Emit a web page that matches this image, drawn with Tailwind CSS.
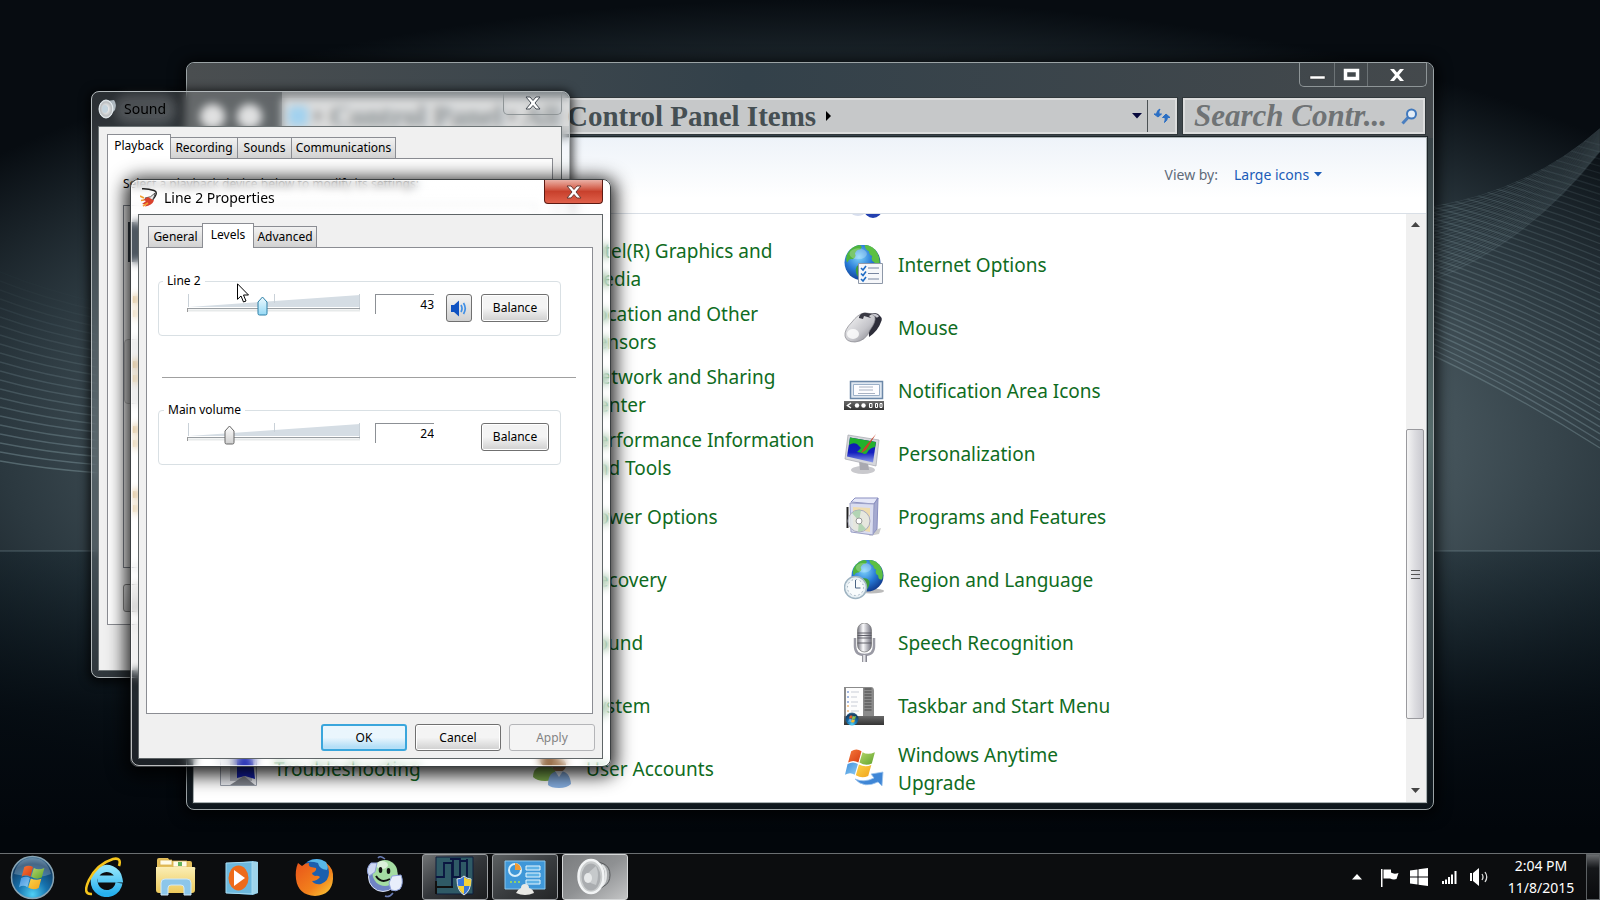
<!DOCTYPE html>
<html lang="en">
    <head>
        <meta charset="UTF-8" />
        <meta name="viewport" content="width=device-width, initial-scale=1.0" />
        <title>Desktop</title>
        <script src="https://cdn.jsdelivr.net/npm/@tailwindcss/browser@4"></script>
        <style>
            .slider {
                appearance: none;
                background: transparent;
            }
            .slider::-webkit-slider-thumb {
                appearance: none;
                width: 11px;
                height: 20px;
                background: url("data:image/svg+xml,<svg xmlns='http://www.w3.org/2000/svg' width='11' height='20'><defs><linearGradient id='a' x2='0' y2='1'><stop stop-color='white'/><stop offset='1' stop-color='%23cfcfcf'/></linearGradient></defs><path d='M5.5 1L10 6v11.500q0 1.500-1.500 1.500h-6Q1 19 1 17.500V6z' fill='url(%23a)' stroke='%23666'/></svg>");
            }
            .slider-hot::-webkit-slider-thumb {
                background: url("data:image/svg+xml,<svg xmlns='http://www.w3.org/2000/svg' width='11' height='20'><defs><linearGradient id='a' x2='0' y2='1'><stop stop-color='%23eefaff'/><stop offset='1' stop-color='%2396d9f5'/></linearGradient></defs><path d='M5.5 1L10 6v11.500q0 1.500-1.500 1.500h-6Q1 19 1 17.500V6z' fill='url(%23a)' stroke='%232c7fa6'/></svg>");
            }
        </style>
    </head>
    <body
        class="relative h-screen overflow-hidden bg-black font-['Noto_Sans','Open_Sans',sans-serif] text-[12px] leading-[18px] text-black"
    >
        <!-- wallpaper -->
        <svg
            class="absolute inset-0 h-full w-full"
            viewBox="0 0 1600 900"
            preserveAspectRatio="none"
            aria-hidden="true"
        >
            <defs>
                <radialGradient id="glow" gradientUnits="userSpaceOnUse" cx="0" cy="0" r="1" gradientTransform="translate(820 440) scale(1080 440)">
                    <stop offset="0" stop-color="#6a7c82" />
                    <stop offset=".5" stop-color="#506067" />
                    <stop offset=".76" stop-color="#2b383f" />
                    <stop offset="1" stop-color="#070c11" />
                </radialGradient>
                <linearGradient id="floor" x2="0" y2="1">
                    <stop offset="0" stop-color="#0b1a22" stop-opacity=".35" />
                    <stop offset=".45" stop-color="#050c12" stop-opacity=".85" />
                    <stop offset=".8" stop-color="#02060b" />
                </linearGradient>
                <clipPath id="veil">
                    <path d="M1434 206Q1530 190 1600 128V470H1434z" />
                </clipPath>

                <radialGradient id="sea" cx=".4" cy=".35" r=".75">
                    <stop offset="0" stop-color="#7fd4fb" />
                    <stop offset=".5" stop-color="#2779d6" />
                    <stop offset="1" stop-color="#0b2c7c" />
                </radialGradient>
                <linearGradient id="metal" x2="1" y2="1">
                    <stop offset="0" stop-color="#fdfdfd" />
                    <stop offset=".6" stop-color="#c4c4c9" />
                    <stop offset="1" stop-color="#77777f" />
                </linearGradient>
                <linearGradient id="metalH" x2="1" y2="0">
                    <stop offset="0" stop-color="#75757f" />
                    <stop offset=".4" stop-color="#fbfbfd" />
                    <stop offset="1" stop-color="#70707c" />
                </linearGradient>
                <linearGradient id="screen" x2="0" y2="1">
                    <stop offset="0" stop-color="#0a17a8" />
                    <stop offset=".6" stop-color="#1420c0" />
                    <stop offset="1" stop-color="#8c9be8" />
                </linearGradient>
                <linearGradient id="bar" x2="0" y2="1">
                    <stop offset="0" stop-color="#6a6a6a" />
                    <stop offset="1" stop-color="#333" />
                </linearGradient>
                <linearGradient id="fr" x2="1" y2="1"><stop offset="0" stop-color="#f6793a" /><stop offset="1" stop-color="#d63c12" /></linearGradient>
                <linearGradient id="fg" x2="1" y2="1"><stop offset="0" stop-color="#b6d66a" /><stop offset="1" stop-color="#5ea32c" /></linearGradient>
                <linearGradient id="fb" x2="1" y2="1"><stop offset="0" stop-color="#3f8fdc" /><stop offset="1" stop-color="#8ccbf3" /></linearGradient>
                <linearGradient id="fy" x2="1" y2="1"><stop offset="0" stop-color="#fbd44a" /><stop offset="1" stop-color="#f2a31b" /></linearGradient>
                <radialGradient id="orb" cx=".5" cy=".9" r=".9">
                    <stop offset="0" stop-color="#4fd0f5" />
                    <stop offset=".4" stop-color="#1672ae" />
                    <stop offset=".8" stop-color="#123c63" />
                    <stop offset="1" stop-color="#47779a" />
                </radialGradient>
                <linearGradient id="ie" x2="0" y2="1"><stop offset="0" stop-color="#8fe4fc" /><stop offset="1" stop-color="#27b0ee" /></linearGradient>
                <linearGradient id="folder" x2="0" y2="1"><stop offset="0" stop-color="#fbeeb4" /><stop offset="1" stop-color="#ecc95c" /></linearGradient>
                <linearGradient id="fox" x2="1" y2="1"><stop offset="0" stop-color="#e8541a" /><stop offset=".6" stop-color="#f2811c" /><stop offset="1" stop-color="#fbd03a" /></linearGradient>
                <radialGradient id="cone"><stop offset="0" stop-color="#777" /><stop offset=".35" stop-color="#e8e8e8" /><stop offset=".8" stop-color="#b9bdc0" /><stop offset="1" stop-color="#eceff1" /></radialGradient>

                <symbol id="globe" viewBox="0 0 34 34">
                    <circle cx="17" cy="17" r="16.500" fill="url(#sea)" />
                    <path d="M3 9Q7 2 14 1q4 1 1 4-4 0-5 4 2 3-2 5-3-1-5 3-2-3 0-8z" fill="#4fb53c" />
                    <path d="M19 1q8 0 12 8 3 6 1 12-4 1-4-4-4-2-2-6-3-1-3-4-4-2-4-6z" fill="#5cc043" />
                    <path d="M12 20q5-1 7 3 1 4-3 9-4-1-5-6-1-3 1-6z" fill="#3f9e3a" />
                    <ellipse cx="13" cy="9" rx="8" ry="5" fill="#fff" opacity=".25" />
                </symbol>
                <symbol id="flag" viewBox="0 0 32 30">
                    <path d="M6 3Q11 0 16 3l-3 11Q8 11 3 14z" fill="url(#fr)" />
                    <path d="M17 4q5 3 12 0l-3 11q-6 3-12-1z" fill="url(#fg)" />
                    <path d="M2.500 15.500Q8 12.500 12.500 15.500L9.500 26Q5 23 0 26z" fill="url(#fb)" />
                    <path d="M13.500 16q6 3 12 .5L22.500 27q-6 3-12-.5z" fill="url(#fy)" />
                </symbol>
            </defs>
            <rect width="1600" height="900" fill="url(#glow)" />
            <g id="waves" fill="none" stroke-width="1.400"></g>
            <g id="veil-waves" fill="none" stroke-width="1.400" clip-path="url(#veil)"></g>
            <rect y="551" width="1600" height="349" fill="url(#floor)" />
            <path d="M0 551h1600" stroke="#7d969c" stroke-opacity=".5" />
        </svg>

        <!-- Control Panel -->
        <section
            class="absolute top-[62px] left-[186px] flex h-[748px] w-[1248px] flex-col rounded-lg border border-[#9ba3a5] bg-linear-to-b from-[#313a3f] via-[#566b6b] to-[#0d151b] px-[6px] pb-[6px] shadow-[0_2px_14px_4px_rgba(0,0,0,0.75)]"
        >
            <div class="absolute inset-x-0 top-0 h-[75px] rounded-t-lg bg-linear-to-r from-[#4a4e50] via-[#33414a] via-45% to-[#44494c]"></div>
            <div class="relative flex h-[35px] justify-end">
                <div class="flex h-[24px] rounded-b-[5px] border border-t-0 border-[#8e9597] text-white">
                    <button class="flex w-[35px] items-end justify-center border-r border-[#6c7376] pb-[6px]" aria-label="Minimize">
                        <svg width="17" height="5"><path d="M1 1h15v3H1z" fill="#fff" stroke="#333" stroke-width=".5" /></svg>
                    </button>
                    <button class="flex w-[33px] items-center justify-center border-r border-[#6c7376]" aria-label="Maximize">
                        <svg width="17" height="13"><path d="M2.500 2.500h12v8h-12z" fill="none" stroke="#fff" stroke-width="3.500" /></svg>
                    </button>
                    <button class="flex w-[58px] items-center justify-center" aria-label="Close">
                        <svg width="14" height="12"><path d="M0 0h4l3 3.500L10 0h4L9 6l5 6h-4L7 8.500 4 12H0l5-6z" fill="#fff" /></svg>
                    </button>
                </div>
            </div>
            <div class="relative flex h-[36px] shrink-0 items-stretch pr-[2px]">
                <div class="flex w-[89px] items-center gap-3 pl-[7px]">
                    <button class="size-[25px] rounded-full border border-white bg-white/80" aria-label="Back"></button>
                    <button class="size-[25px] rounded-full border border-white bg-white/80" aria-label="Forward"></button>
                </div>
                <nav
                    class="flex min-w-0 flex-1 items-center border-2 border-[#dcdddd] bg-[#c6c8c9] pl-[4px] font-['Liberation_Serif',serif] text-[29px] leading-[30px] font-bold text-[#454f53] outline outline-[#31383b]"
                    aria-label="Address"
                >
                    <span class="size-[20px] rounded bg-[#6db8e6]"></span>
                    <svg class="mx-[8px] shrink-0" width="6" height="10"><path d="M0 0l5 5-5 5z" /></svg>
                    <a href="#" class="shrink-0">Control Panel</a>
                    <svg class="mx-[7px] shrink-0" width="6" height="10"><path d="M0 0l5 5-5 5z" /></svg>
                    <a href="#" class="shrink-0">All Control Panel Items</a>
                    <svg class="mx-[10px] shrink-0" width="6" height="10"><path d="M0 0l5 5-5 5z" fill="#000" /></svg>
                    <svg class="mr-[5px] ml-auto" width="10" height="6"><path d="M0 0h10L5 5.500z" fill="#06083c" /></svg>
                    <button class="flex h-full w-[28px] items-center justify-center border-l border-[#4b5154]" aria-label="Refresh">
                        <svg width="18" height="16" viewBox="0 0 18 16">
                            <path d="M5 9l-4-3h2.500Q4 2 7 1 5.500 3 6 6h2.500z" fill="#2b6fc4" stroke="#2b6fc4" />
                            <path d="M13 6l4 3.500h-2.500q0 3-3 5Q12.500 12 12 9.500H9.500z" fill="#2b6fc4" stroke="#2b6fc4" />
                        </svg>
                    </button>
                </nav>
                <label class="ml-[6px] flex w-[242px] items-center border-2 border-[#dcdddd] bg-[#c6c8c9] pr-[5px] pl-[9px] outline outline-[#31383b]">
                    <input
                        type="text"
                        aria-label="Search Control Panel"
                        placeholder="Search Contr..."
                        class="w-[204px] min-w-0 flex-1 font-['Liberation_Serif',serif] text-[31px] leading-[30px] font-bold italic outline-none placeholder:text-[#6f7375]"
                    />
                    <svg class="shrink-0" width="17" height="17" viewBox="0 0 17 17" fill="none">
                        <path d="M1.500 15.500L7 9.500" stroke="#4a7fc0" stroke-width="3" />
                        <circle cx="10.500" cy="6" r="4.500" fill="#e3edf7" stroke="#3f78bd" stroke-width="2" />
                    </svg>
                </label>
            </div>
            <main class="relative mt-[3px] flex min-h-0 flex-1 flex-col border border-[#a9b1b3] bg-white outline outline-[#1c2428]">
                <div class="flex h-[76px] shrink-0 items-center justify-end gap-[16px] border-b border-[#d9dfe6] bg-linear-to-b from-[#eef3f9] to-white to-80% pr-[104px] pb-[2px] text-[14px] leading-[20px]">
                    <label for="view" class="text-[#5f6b7a]">View by:</label>
                    <span class="relative flex items-center">
                        <select id="view" class="w-[88px] appearance-none text-[#1c5cb8]">
                            <option>Large icons</option>
                        </select>
                        <svg class="pointer-events-none absolute right-0" width="8" height="5"><path d="M0 0h8L4 4.500z" fill="#1c5cb8" /></svg>
                    </span>
                </div>
                <div class="flex min-h-0 flex-1">
                    <div class="flex min-w-0 flex-1 items-end overflow-hidden pb-[2px] pl-[26px] text-[19px] leading-[28px] text-[#0f6c22]">
                        <ul class="w-[312px]">
                            <li class="flex h-[63px] items-center gap-[14px]">
                                <svg class="shrink-0" width="40" height="40" viewBox="0 0 40 40">
                                    <path d="M.500 3.500h36v33h-36z" fill="#eef0f5" stroke="#9aa0ac" />
                                    <path d="M10 6h22v26H10z" fill="#b9bcc6" />
                                    <path d="M17 4l15-1 3 27-10-3-8 2z" fill="#1420b0" />
                                    <path d="M10 36l14-9 11 9z" fill="#82868f" />
                                </svg>
                                <a href="#" class="w-[232px]">Troubleshooting</a>
                            </li>
                        </ul>
                        <ul class="w-[312px]">
                            <li class="flex h-[63px] items-center pl-[54px]"><a href="#" class="w-[232px]">Intel(R) Graphics and Media</a></li>
                            <li class="flex h-[63px] items-center pl-[54px]"><a href="#" class="w-[232px]">Location and Other Sensors</a></li>
                            <li class="flex h-[63px] items-center pl-[54px]"><a href="#" class="w-[232px]">Network and Sharing Center</a></li>
                            <li class="flex h-[63px] items-center pl-[54px]"><a href="#" class="w-[232px]">Performance Information and Tools</a></li>
                            <li class="flex h-[63px] items-center pl-[54px]"><a href="#" class="w-[232px]">Power Options</a></li>
                            <li class="flex h-[63px] items-center pl-[54px]"><a href="#" class="w-[232px]">Recovery</a></li>
                            <li class="flex h-[63px] items-center pl-[54px]"><a href="#" class="w-[232px]">Sound</a></li>
                            <li class="flex h-[63px] items-center pl-[54px]"><a href="#" class="w-[232px]">System</a></li>
                            <li class="flex h-[63px] items-center gap-[14px]">
                                <svg class="shrink-0" width="40" height="40" viewBox="0 0 40 40">
                                    <circle cx="17" cy="10" r="9" fill="#8a5a34" />
                                    <path d="M1 28Q1 17 13 17t12 12q-4 3-12 3T1 28z" fill="#7fae4e" />
                                    <circle cx="27" cy="16" r="7" fill="#a47a54" />
                                    <path d="M16 36q0-14 11-14t12 13q-4 4-12 4t-11-3z" fill="#86aee0" />
                                    <path d="M23 22l4 6 4-6z" fill="#e8f0fa" />
                                </svg>
                                <a href="#" class="w-[232px]">User Accounts</a>
                            </li>
                        </ul>
                        <ul class="w-[312px]">
                            <li class="flex h-[63px] items-center gap-[14px]">
                                <!-- only the foot of this icon shows under the header -->
                                <svg class="shrink-0" width="40" height="40" viewBox="0 0 40 40">
                                    <ellipse cx="14" cy="28" rx="8" ry="6" fill="#d7deee" />
                                    <circle cx="29" cy="27" r="9" fill="#2340b0" />
                                </svg>
                            </li>
                            <li class="flex h-[63px] items-center gap-[14px]">
                                <svg class="shrink-0" width="40" height="40" viewBox="0 0 40 40">
                                    <use href="#globe" x="0" y="-1" width="37" height="37" />
                                    <path d="M14.500 18.500h24v20h-24z" fill="#f6f7fa" stroke="#8e98a8" />
                                    <path d="M24 23h11M24 28.500h11M24 34h11" stroke="#7785a0" stroke-width="1.200" />
                                    <path d="M17 23l2 2 3-4M17 28.500l2 2 3-4M17 34l2 2 3-4" fill="none" stroke="#1f6cc4" stroke-width="1.600" />
                                </svg>
                                <a href="#" class="w-[232px]">Internet Options</a>
                            </li>
                            <li class="flex h-[63px] items-center gap-[14px]">
                                <svg class="shrink-0" width="40" height="40" viewBox="0 0 40 40">
                                    <path d="M24 6q9-3 12 2 3 2 1 6-3 9-12 15z" fill="#2e2e3a" />
                                    <path d="M26 7q6-1 8 2" fill="none" stroke="#c9c9d0" stroke-width="2.500" />
                                    <path d="M1 28Q0 22 8 14 14 6 20 5q9 0 11 4 1 5-5 13-4 11-15 12-9 0-10-6z" fill="url(#metal)" stroke="#85858d" stroke-width=".7" />
                                    <path d="M15 9q2-5 8-4l5 1-3 2 2 2-7-2-1 3-4-1z" fill="#3a3a44" />
                                    <ellipse cx="9" cy="26" rx="6" ry="5" fill="#fff" opacity=".8" />
                                </svg>
                                <a href="#" class="w-[232px]">Mouse</a>
                            </li>
                            <li class="flex h-[63px] items-center gap-[14px]">
                                <svg class="shrink-0" width="40" height="40" viewBox="0 0 40 40">
                                    <path d="M6.500 10.500h32v17h-32z" fill="#dfe7f0" stroke="#6c88a8" stroke-width="1.500" />
                                    <path d="M9.500 13.500h26v11h-26z" fill="#fdfdff" stroke="#9bb0c8" />
                                    <path d="M15 16h14M15 19h14M14 22.500h17" stroke="#a8b2c2" />
                                    <path d="M0 30h40v9H0z" fill="url(#bar)" />
                                    <path d="M7 32l-3.500 2.500L7 37" fill="none" stroke="#fff" stroke-width="1.500" />
                                    <circle cx="13" cy="34.500" r="2.200" fill="#fff" /><circle cx="19.500" cy="34.500" r="2.200" fill="#fff" />
                                    <path d="M25.500 32.500h2.500v4h-2.500zM31.500 32.500h2v4h-2zM36 32.500h2v4h-2z" fill="none" stroke="#fff" />
                                </svg>
                                <a href="#" class="w-[232px]">Notification Area Icons</a>
                            </li>
                            <li class="flex h-[63px] items-center gap-[14px]">
                                <svg class="shrink-0" width="40" height="40" viewBox="0 0 40 40">
                                    <ellipse cx="19" cy="36" rx="12" ry="4" fill="#c9c9cd" />
                                    <path d="M15 27l9 2 1 7h-9z" fill="#a9a9b0" />
                                    <path d="M4 1l31 5-3 26L1 25z" fill="#d6d7dc" stroke="#a5a6ad" stroke-width=".7" />
                                    <path d="M6 3.500l26 4.500-3 20.500L3 22.500z" fill="url(#screen)" />
                                    <path d="M6 3.500l26 4.500-1 5q-6 1-8 6-2 2-5 0l-5-1 4-4-4-4q-4-2-8 1z" fill="#23b02c" />
                                    <path d="M32 0L20 14l-3 5 5-3z" fill="#c6432a" />
                                </svg>
                                <a href="#" class="w-[232px]">Personalization</a>
                            </li>
                            <li class="flex h-[63px] items-center gap-[14px]">
                                <svg class="shrink-0" width="40" height="40" viewBox="0 0 40 40">
                                    <path d="M28 34l9-3-2 6-10 2z" fill="#ccc" />
                                    <path d="M7 5l4-4h23l-4 6z" fill="#e6e8f8" stroke="#8a8fc0" />
                                    <path d="M30 7l4-6-1 31-5 6z" fill="#a5aad0" stroke="#8a8fc0" />
                                    <path d="M6 6l24 1-1 31-22-3z" fill="#d9dcef" stroke="#9a9fc6" />
                                    <path d="M9 10l17 1v24l-17-3z" fill="#efdcae" />
                                    <path d="M2.500 10h2v21h-2z" fill="#222" />
                                    <circle cx="15" cy="24" r="11" fill="#e4e9e6" fill-opacity=".85" stroke="#aab" />
                                    <path d="M15 24L8 16q5-4 9-3zM15 24l7 8q-4 3-8 3z" fill="#a5cfa9" opacity=".8" />
                                    <circle cx="15" cy="24" r="3" fill="#fff" stroke="#999" />
                                </svg>
                                <a href="#" class="w-[232px]">Programs and Features</a>
                            </li>
                            <li class="flex h-[63px] items-center gap-[14px]">
                                <svg class="shrink-0" width="40" height="40" viewBox="0 0 40 40">
                                    <ellipse cx="27" cy="31" rx="13" ry="2.500" fill="#bbb" />
                                    <use href="#globe" x="7" y="-1" width="33" height="33" />
                                    <circle cx="11.500" cy="27.500" r="11" fill="#e8f0f4" stroke="#9fb4c2" stroke-width="1.500" />
                                    <circle cx="11.500" cy="27.500" r="8" fill="#f8fbfc" stroke="#7a90a4" stroke-dasharray="1 3.200" />
                                    <path d="M11.500 20v8h5" fill="none" stroke="#4a6484" />
                                </svg>
                                <a href="#" class="w-[232px]">Region and Language</a>
                            </li>
                            <li class="flex h-[63px] items-center gap-[14px]">
                                <svg class="shrink-0" width="40" height="40" viewBox="0 0 40 40">
                                    <path d="M11 15v8q0 9 9.500 9t9.500-9v-8" fill="none" stroke="#9a9aa4" stroke-width="2.500" />
                                    <path d="M18 32h5v7h-5z" fill="url(#metalH)" />
                                    <rect x="13.500" y="0" width="14" height="29" rx="7" fill="url(#metalH)" stroke="#777" stroke-width=".7" />
                                    <path d="M13.500 10h14M13.500 12.500h14M13.500 15h14M13.500 20h14" stroke="#55555f" stroke-width=".9" />
                                </svg>
                                <a href="#" class="w-[232px]">Speech Recognition</a>
                            </li>
                            <li class="flex h-[63px] items-center gap-[14px]">
                                <svg class="shrink-0" width="40" height="40" viewBox="0 0 40 40">
                                    <path d="M0 1h27q3 0 3 4v26H0z" fill="#8b8b8b" />
                                    <path d="M2 2h17v28H2z" fill="#fdfdfd" />
                                    <path d="M3 6h2M3 11h2M3 16h2" stroke="#4a74c4" /><path d="M3 20h2M3 25h2" stroke="#e8963a" />
                                    <path d="M7 6h8M7 11h6M7 16h7M7 20h6M7 25h8" stroke="#c9cdd6" />
                                    <path d="M20.500 3h7M20.500 6h7M20.500 9h7M20.500 12h7M20.500 15h7M20.500 18h7M20.500 21h7M20.500 24h7" stroke="#5f5f5f" stroke-width="1.500" />
                                    <path d="M0 30h40v9H0z" fill="url(#bar)" />
                                    <circle cx="8" cy="33" r="6.500" fill="url(#orb)" />
                                    <use href="#flag" x="4" y="29" width="9" height="8" />
                                </svg>
                                <a href="#" class="w-[232px]">Taskbar and Start Menu</a>
                            </li>
                            <li class="flex h-[63px] items-center gap-[14px]">
                                <svg class="shrink-0" width="40" height="40" viewBox="0 0 40 40">
                                    <use href="#flag" x="1" y="-1" width="33" height="31" />
                                    <path d="M11 30q9 4 19-1l-3-4 12-2-1 14-4-4q-14 7-23-3z" fill="#3f86d6" stroke="#9cc4ee" stroke-width=".8" />
                                </svg>
                                <a href="#" class="w-[232px]">Windows Anytime Upgrade</a>
                            </li>
                        </ul>
                    </div>
                    <div class="flex w-[20px] shrink-0 flex-col items-center bg-[#f0f0f0] pt-[8px] pr-[2px] pb-[9px]">
                        <svg width="9" height="5"><path d="M4.500 0L9 5H0z" fill="#444" /></svg>
                        <div class="mt-[202px] flex h-[290px] w-[18px] flex-col items-center justify-center gap-[3px] rounded-[2px] border border-[#9a9a9e] bg-linear-to-r from-[#f4f4f4] via-[#dcdce0] to-[#c9c9cf]">
                            <span class="h-px w-[9px] bg-[#555]"></span>
                            <span class="h-px w-[9px] bg-[#555]"></span>
                            <span class="h-px w-[9px] bg-[#555]"></span>
                        </div>
                        <svg class="mt-auto" width="9" height="5"><path d="M0 0h9L4.500 5z" fill="#444" /></svg>
                    </div>
                </div>
            </main>
        </section>

        <!-- Sound -->
        <section
            class="absolute top-[91px] left-[91px] flex h-[587px] w-[479px] flex-col rounded-lg border border-[#b4babc] bg-white/15 pr-[7px] pb-[6px] pl-[6px] shadow-[0_2px_10px_3px_rgba(0,0,0,0.7)] backdrop-blur-[4px]"
        >
            <div class="absolute inset-y-0 top-0 right-0 left-[190px] h-[34px] rounded-tr-lg bg-white/25"></div>
            <header class="relative flex h-[34px] shrink-0 items-start">
                <div class="flex h-full items-center gap-[3px]">
                    <svg width="19" height="20" viewBox="0 0 19 20">
                        <path d="M9 2l7-1q3 4 1 10l-6 6z" fill="#aab4bc" />
                        <ellipse cx="8" cy="10" rx="7" ry="9" fill="url(#cone)" stroke="#e6eef2" />
                        <ellipse cx="7" cy="10" rx="3" ry="4" fill="#c4d4de" />
                    </svg>
                    <h2 class="rounded-xl bg-white/15 px-1 text-[14px] shadow-[0_0_8px_6px_rgba(255,255,255,0.15)]">Sound</h2>
                </div>
                <button class="ml-auto flex h-[23px] w-[59px] items-center justify-center rounded-b-[5px] border border-t-0 border-[#8e9496]" aria-label="Close">
                    <svg width="16" height="14" viewBox="-1 -1 16 14"><path d="M0 0h4l3 3.500L10 0h4L9 6l5 6h-4L7 8.500 4 12H0l5-6z" fill="#fff" stroke="#444b52" /></svg>
                </button>
            </header>
            <div class="relative flex min-h-0 flex-1 flex-col border border-[#6d7476] bg-[#f0f0f0] px-[8px] pt-[7px] pb-[45px]">
                <div class="flex items-end" role="tablist">
                    <button role="tab" class="relative z-10 -mb-px h-[25px] w-[64px] border border-b-0 border-[#8b8d93] bg-white pb-[3px]">Playback</button>
                    <button role="tab" class="h-[21px] w-[67px] border border-b-0 border-l-0 border-[#8b8d93] bg-linear-to-b from-[#f2f2f2] to-[#d2d2d2]">Recording</button>
                    <button role="tab" class="h-[21px] w-[54px] border border-b-0 border-l-0 border-[#8b8d93] bg-linear-to-b from-[#f2f2f2] to-[#d2d2d2]">Sounds</button>
                    <button role="tab" class="h-[21px] w-[104px] border border-b-0 border-l-0 border-[#8b8d93] bg-linear-to-b from-[#f2f2f2] to-[#d2d2d2]">Communications</button>
                </div>
                <div class="flex flex-1 flex-col border border-[#8b8d93] bg-white px-[15px] pt-[16px] pb-[12px]">
                    <p>Select a playback device below to modify its settings:</p>
                    <ul class="mt-[12px] flex-1 border border-[#828790] bg-white pt-[3px]">
                        <li class="flex h-[65px] items-center pl-[4px]"><span class="h-[40px] w-[40px] bg-[#3a444f]"></span></li>
                        <li class="flex h-[65px] flex-col justify-center gap-[7px] pl-[9px]">
                            <span class="size-[7px] bg-[#c89a50]"></span><span class="size-[7px] bg-[#e2c694]"></span>
                        </li>
                        <li class="flex h-[65px] flex-col justify-center gap-[7px] rounded border border-[#c4c4c4] bg-[#ececec] pl-[8px]">
                            <span class="size-[7px] bg-[#c89a50]"></span><span class="size-[7px] bg-[#d9b67a]"></span>
                        </li>
                        <li class="flex h-[65px] flex-col justify-center gap-[7px] pl-[9px]">
                            <span class="size-[7px] bg-[#c89a50]"></span><span class="size-[7px] bg-[#d9b67a]"></span>
                        </li>
                        <li class="flex h-[65px] flex-col justify-center gap-[7px] pl-[9px]">
                            <span class="size-[7px] bg-[#c89a50]"></span><span class="size-[7px] bg-[#d9b67a]"></span>
                        </li>
                    </ul>
                    <button class="mt-[16px] h-[28px] w-[86px] rounded-[3px] border border-[#888] bg-linear-to-b from-[#f2f2f2] to-[#cfcfcf]" aria-label="Configure"></button>
                </div>
            </div>
        </section>

        <!-- Line 2 Properties -->
        <section
            class="absolute top-[179px] left-[130px] flex h-[588px] w-[481px] flex-col rounded-lg border border-[#3c4042] bg-white/10 px-[7px] pb-[7px] shadow-[0_4px_18px_5px_rgba(0,0,0,0.85)] backdrop-blur-[4px]"
        >
            <div class="pointer-events-none absolute inset-0 rounded-lg border border-white/70"></div>
            <div class="absolute inset-x-0 top-0 h-[34px] rounded-t-lg bg-linear-to-b from-white/30 to-white/80"></div>
            <header class="relative flex h-[34px] shrink-0 items-start">
                <div class="flex h-full items-center gap-[6px] pt-px pl-[2px]">
                    <svg width="18" height="19" viewBox="0 0 18 19" fill="none">
                        <path d="M2 .8q6-.3 12 1.700 3 1 2 4-2 5-7 8" stroke="#222" stroke-width="1.400" />
                        <path d="M15 5q-4 5-10 5l3 5q6-2 7-10z" fill="#e9e9e9" stroke="#333" stroke-width=".8" />
                        <path d="M8 9l-5 3 3 1-4 3 4 .5-1 2q7-1 9-6z" fill="#d8402c" />
                        <path d="M0 8l4 2M1 12.500l3-.5M3 18l5-3" stroke="#f2a033" stroke-width="1.700" />
                    </svg>
                    <h2 class="text-[14px]">Line 2 Properties</h2>
                </div>
                <button
                    class="ml-auto flex h-[24px] w-[59px] items-center justify-center rounded-b-[4px] border border-t-0 border-[#5c1a12] bg-linear-to-b from-[#eab0a6] via-[#c8402c] via-50% to-[#e0604a]"
                    aria-label="Close"
                >
                    <svg width="16" height="14" viewBox="-1 -1 16 14"><path d="M0 0h4l3 3.500L10 0h4L9 6l5 6h-4L7 8.500 4 12H0l5-6z" fill="#fff" stroke="#6a3a34" /></svg>
                </button>
            </header>
            <div class="relative flex min-h-0 flex-1 flex-col border border-[#5f6567] bg-[#f0f0f0] pt-[8px] pr-[7px] pb-[7px] pl-[7px]">
                <div class="flex items-end pl-[2px]" role="tablist">
                    <button role="tab" class="h-[21px] w-[54px] border border-r-0 border-b-0 border-[#8b8d93] bg-linear-to-b from-[#f2f2f2] to-[#d2d2d2]">General</button>
                    <button role="tab" class="relative z-10 -mb-px h-[25px] w-[52px] border border-b-0 border-[#8b8d93] bg-white pb-[3px]">Levels</button>
                    <button role="tab" class="h-[21px] w-[63px] border border-b-0 border-l-0 border-[#8b8d93] bg-linear-to-b from-[#f2f2f2] to-[#d2d2d2]">Advanced</button>
                </div>
                <div class="mr-[2px] flex-1 border border-[#8b8d93] bg-white pt-[24px] pl-[11px]">
                    <fieldset class="h-[64px] w-[403px] rounded-[4px] border border-[#d9e0e4]">
                        <legend class="ml-[4px] px-[4px]">Line 2</legend>
                        <div class="flex pt-[4px] pl-[28px]">
                            <div class="relative h-[28px] w-[173px]">
                                <svg width="173" height="28">
                                    <path d="M2 13L173 1v12H2z" fill="#d5dde4" />
                                    <path d="M1.500 0v13M87.500 0v9M172.500 0v17" stroke="#c9d1d8" />
                                    <path d="M0 14.500h173" stroke="#9a9fa3" /><path d="M0 15.500h173v2H0z" fill="#e7eaea" />
                                    <path d="M.500 14v4" stroke="#999" />
                                </svg>
                                <input type="range" min="0" max="100" value="43" aria-label="Line 2 level" class="slider slider-hot absolute inset-x-0 top-[2px] h-[20px] w-full" />
                            </div>
                            <input type="text" value="43" aria-label="Line 2 level value" class="ml-[15px] h-[20px] w-[59px] border-t border-l border-[#8c9095] text-right" />
                            <button class="ml-[12px] flex h-[28px] w-[26px] items-center justify-center rounded-[3px] border border-[#707070] bg-linear-to-b from-[#f4f4f4] to-[#d0d0d0]" aria-label="Mute">
                                <svg width="18" height="17" viewBox="0 0 18 17" fill="none">
                                    <path d="M1 5h3l5-4.500v16L4 12H1z" fill="#0f52c2" />
                                    <path d="M11 5q2 3.500 0 7M13.500 3q3.500 5.500 0 11" stroke="#3f8fe6" stroke-width="1.700" />
                                </svg>
                            </button>
                            <button class="ml-[9px] h-[28px] w-[68px] rounded-[3px] border border-[#707070] bg-linear-to-b from-[#f4f4f4] from-50% to-[#cfcfcf] shadow-[inset_0_0_0_1px_#fff]">Balance</button>
                        </div>
                    </fieldset>
                    <hr class="mt-[41px] ml-[4px] w-[414px] border-[#a0a0a0]" />
                    <fieldset class="mt-[23px] h-[64px] w-[403px] rounded-[4px] border border-[#d9e0e4]">
                        <legend class="ml-[5px] px-[4px]">Main volume</legend>
                        <div class="flex pt-[4px] pl-[28px]">
                            <div class="relative h-[28px] w-[173px]">
                                <svg width="173" height="28">
                                    <path d="M2 13L173 1v12H2z" fill="#d5dde4" />
                                    <path d="M1.500 0v13M87.500 0v9M172.500 0v17" stroke="#c9d1d8" />
                                    <path d="M0 14.500h173" stroke="#9a9fa3" /><path d="M0 15.500h173v2H0z" fill="#e7eaea" />
                                    <path d="M.500 14v4" stroke="#999" />
                                </svg>
                                <input type="range" min="0" max="100" value="23" aria-label="Main volume level" class="slider absolute inset-x-0 top-[2px] h-[20px] w-full" />
                            </div>
                            <input type="text" value="24" aria-label="Main volume value" class="ml-[15px] h-[20px] w-[59px] border-t border-l border-[#8c9095] text-right" />
                            <button class="ml-[47px] h-[28px] w-[68px] rounded-[3px] border border-[#707070] bg-linear-to-b from-[#f4f4f4] from-50% to-[#cfcfcf] shadow-[inset_0_0_0_1px_#fff]">Balance</button>
                        </div>
                    </fieldset>
                </div>
                <div class="mt-[10px] flex justify-end gap-[8px]">
                    <button class="h-[27px] w-[86px] rounded-[3px] border-2 border-[#3aa6dc] bg-linear-to-b from-[#eaf6fd] from-50% to-[#b4dff7] to-90%">OK</button>
                    <button class="h-[27px] w-[86px] rounded-[3px] border border-[#707070] bg-linear-to-b from-[#f4f4f4] from-50% to-[#cfcfcf] shadow-[inset_0_0_0_1px_#fff]">Cancel</button>
                    <button disabled class="h-[27px] w-[86px] rounded-[3px] border border-[#b4b5b8] bg-[#f4f4f4] text-[#838383]">Apply</button>
                </div>
            </div>
        </section>

        <!-- mouse pointer -->
        <svg class="pointer-events-none absolute top-[283px] left-[237px]" width="13" height="20" viewBox="0 0 13 20">
            <path d="M.500.800v15.500l3.500-3.300 2.500 6 2.500-1-2.500-6h5z" fill="#fff" stroke="#000" />
        </svg>

        <!-- taskbar -->
        <footer class="absolute inset-x-0 bottom-0 flex h-[47px] items-stretch border-t border-[#6b6f72] bg-[#0c0d0f] text-white">
            <button class="ml-[10px] flex w-[45px] items-center justify-center" aria-label="Start">
                <svg width="45" height="45" viewBox="0 0 45 45">
                    <circle cx="22.500" cy="22.500" r="21" fill="url(#orb)" stroke="#88a4b4" stroke-width="1.500" />
                    <path d="M4 19Q8 3 22.500 3T41 19q-9 4-18.500 3T4 19z" fill="#fff" opacity=".22" />
                    <use href="#flag" x="9" y="9" width="28" height="27" />
                </svg>
            </button>
            <button class="ml-[30px] w-[40px]" aria-label="Internet Explorer">
                <svg width="40" height="40" viewBox="0 0 40 40" fill="none">
                    <path d="M34 26A12.500 12.500 0 1 1 34 22H13" stroke="url(#ie)" stroke-width="7" />
                    <path d="M7 37Q-3 38 4 23 12 7 28 2q9-2 6 7" stroke="#f6c51c" stroke-width="2.600" />
                </svg>
            </button>
            <button class="ml-[30px] w-[42px]" aria-label="Windows Explorer">
                <svg width="42" height="42" viewBox="0 0 42 42">
                    <path d="M2 4q0-2 2-2h9l2 3h20q2 0 2 2v8H2z" fill="#e4bf5c" />
                    <path d="M5 4h12v5H5zM18 5h14v6H18z" fill="#fffbe8" stroke="#d8b04a" stroke-width=".8" />
                    <path d="M23 6h4v4h-4z" fill="#63b35c" />
                    <path d="M1 11h38q2 0 1 3v20q0 3-3 3H4q-3 0-3-3z" fill="url(#folder)" />
                    <path d="M6 39V27q0-4 4-4h22q4 0 4 4v12h-7v-7q0-3-3-3H16q-3 0-3 3v7z" fill="#8cc6ea" stroke="#cfe8f8" />
                </svg>
            </button>
            <button class="ml-[28px] w-[38px]" aria-label="Windows Media Player">
                <svg width="36" height="36" viewBox="0 0 36 36">
                    <path d="M1 5l26-3 6 1v31l-6 2-26-2z" fill="#4d9ac8" />
                    <path d="M27 2l6 1v31l-6 2z" fill="#9fd4ea" />
                    <path d="M1 4l26-1v32L1 34z" fill="#6db8dd" stroke="#a9dcf2" />
                    <ellipse cx="13.500" cy="19" rx="10" ry="12.500" fill="#ee6b1a" />
                    <path d="M9 11l11 8-11 8z" fill="#fff" />
                </svg>
            </button>
            <button class="ml-[32px] w-[42px]" aria-label="Firefox">
                <svg width="40" height="40" viewBox="0 0 40 40">
                    <circle cx="21" cy="17" r="15" fill="#1c5fae" />
                    <path d="M12 5q10-6 19 0 3 4 1 8-8-1-9-7-6-2-11-1z" fill="#58b7e8" />
                    <path d="M3 6l4 3q3-3 7-3-1 3 2 4l5 1q1 3-4 5 0 2 3 3 3-1 5 1-3 4-8 4 3 4 9 3 8-3 8-12 0-5-3-9 8 5 7 16-1 16-18 17Q3 38 1 22 0 13 3 6z" fill="url(#fox)" />
                </svg>
            </button>
            <button class="ml-[28px] w-[42px]" aria-label="Messenger">
                <svg width="40" height="42" viewBox="0 0 40 42">
                    <path d="M13 2q2-3 7 1M20 40q4 2 8-3" fill="none" stroke="#6a7cb4" stroke-width="1.500" />
                    <circle cx="18" cy="21" r="14.500" fill="#6f84c4" stroke="#dbe3f5" />
                    <ellipse cx="20" cy="17" rx="12.500" ry="13" fill="#a4dca2" />
                    <ellipse cx="17" cy="9" rx="6" ry="4" fill="#fff" opacity=".6" />
                    <ellipse cx="15.500" cy="14" rx="1.800" ry="3" fill="#111" /><ellipse cx="23.500" cy="15" rx="1.800" ry="3" fill="#111" />
                    <path d="M11 20q5 8 14 3" fill="none" stroke="#111" stroke-width="2" />
                    <path d="M27 20l9-1q3 8-1 14-4 3-9 1l-2-7z" fill="#e8eefb" stroke="#8fa2dc" />
                    <path d="M6 7q-6 6-2 13l6-4 2-9z" fill="#cfd9f3" stroke="#8fa2dc" />
                </svg>
            </button>
            <button class="ml-[15px] flex w-[66px] items-center justify-center rounded-[3px] border border-[#9a9da0] bg-linear-to-br from-[#707375] via-[#33363a] to-[#1c1e20]" aria-label="Realtek">
                <svg width="40" height="42" viewBox="0 0 40 42" fill="none">
                    <path d="M1 1h37v37H1z" fill="#2f5a66" stroke="#0f1d3a" />
                    <path d="M1 21h8V7h8v23M15 3h10v24M18 3v18h6M32 3v18M25 5h7" stroke="#0a1640" stroke-width="1.800" />
                    <path d="M1 25v13M2 31h16" stroke="#111" stroke-width="2" />
                    <path d="M22 23q4 0 7-3 3 3 7 3 0 12-7 16-7-4-7-16z" fill="#3b78d8" stroke="#e0e4ea" />
                    <path d="M29 21v9h6.500q.5-3 .5-6.500-4 0-7-2.500zM29 30v8q-4.500-3-6-8z" fill="#f6d238" />
                </svg>
            </button>
            <button class="ml-[4px] flex w-[66px] items-center justify-center rounded-[3px] border border-[#9a9da0] bg-linear-to-br from-[#5c6062] via-[#3a3d40] to-[#232527]" aria-label="Control Panel">
                <svg width="42" height="38" viewBox="0 0 42 38">
                    <path d="M1 3h40v28H1z" fill="#3f97d8" stroke="#8cc8ee" />
                    <circle cx="11" cy="12" r="6" fill="none" stroke="#d8eefa" stroke-width="2" />
                    <path d="M11 12V5q6 1 6 7z" fill="#f09a32" />
                    <path d="M22 8h14v4H22zM22 15h14v4H22zM22 22h14v4H22z" fill="#5fb2e6" stroke="#e6f5fd" />
                    <path d="M6 24h10" stroke="#8fd06a" stroke-width="2" stroke-dasharray="2 2" />
                    <path d="M12 35q2-4 5-5 0-4 4-4t4 4q4 1 5 5-9 4-18 0z" fill="#e9e9e6" />
                </svg>
            </button>
            <button class="ml-[4px] flex w-[66px] items-center justify-center rounded-[3px] border border-[#d5d7d8] bg-linear-to-br from-[#7b7d7f] via-[#8f9193] to-[#c4c5c6]" aria-label="Sound">
                <svg width="38" height="38" viewBox="0 0 38 38">
                    <path d="M20 3l8 3q6 3 6 11t-6 11l-9 6z" fill="#a3a6a8" stroke="#55585a" />
                    <path d="M26 7q4 3 4 10t-4 11" fill="none" stroke="#e4e6e7" stroke-width="2" />
                    <ellipse cx="15" cy="18.500" rx="12.500" ry="16.500" fill="#c9cccd" stroke="#f2f4f5" stroke-width="2.500" />
                    <ellipse cx="15" cy="19" rx="9.500" ry="13.500" fill="#aaadb0" />
                    <path d="M11 16l9-8q4 9 0 19l-8-3z" fill="#c6c9cb" />
                    <ellipse cx="12" cy="20" rx="4" ry="5" fill="#e6e8e9" />
                </svg>
            </button>
            <div class="ml-auto flex items-center">
                <svg width="10" height="6"><path d="M5 0l5 5.500H0z" fill="#fff" /></svg>
                <svg class="ml-[19px]" width="18" height="19" viewBox="0 0 18 19"><path d="M0 1h1.500v18H0zM2.500 1.500h7.500v3q3 2 7.500.500l-2 6q-3 1-6.500-.500h-6.500z" fill="#fff" /></svg>
                <svg class="ml-[11px]" width="18" height="18" viewBox="0 0 18 18"><path d="M0 2.500L7.500 1.400v7.100H0zM8.500 1.300L18 0v8.500H8.500zM0 9.500h7.500v7.100L0 15.500zM8.500 9.500H18V18l-9.500-1.300z" fill="#fff" /></svg>
                <svg class="ml-[14px]" width="15" height="13" viewBox="0 0 15 13"><path d="M0 10h2v3H0zM3 8.500h2V13H3zM6 6h2v7H6zM9 3.500h2V13H9zM12.500 0h2v13h-2z" fill="#fff" /></svg>
                <svg class="ml-[13px]" width="19" height="18" viewBox="0 0 19 18" fill="none"><path d="M0 5h2v8H0zM3 5l6-5v18l-6-5z" fill="#fff" /><path d="M12 6q2 3 0 6M15 4q3.500 5 0 10" stroke="#ddd" stroke-width="1.300" /></svg>
                <div class="ml-[9px] flex w-[86px] flex-col text-center text-[14px] leading-[22px]">
                    <span>2:04 PM</span>
                    <span>11/8/2015</span>
                </div>
            </div>
            <button class="ml-[2px] w-[14px] border border-[#5c6063] bg-linear-to-b from-[#6a6d70] via-[#15171a] via-30% to-[#0a0b0d]" aria-label="Show desktop"></button>
        </footer>

        <script>
            const waves = document.getElementById("waves");
            const veilWaves = document.getElementById("veil-waves");

            function addCurve(group, d, opacity) {
                const path = document.createElementNS("http://www.w3.org/2000/svg", "path");
                path.setAttribute("d", d);
                path.setAttribute("stroke", "#8fa9b0");
                path.setAttribute("stroke-opacity", opacity);
                group.appendChild(path);
            }

            // left edge
            for (let i = 0; i < 22; i++) {
                const y = 461 - i * 9;
                addCurve(waves, `M0 ${y}Q45 ${y + 8 + i * 0.5} 100 ${y + 12 + i * 0.9}`, 0.4 - i * 0.018);
            }
            // right edge, falling lines
            for (let i = 0; i < 44; i++) {
                const t = i / 43;
                const a = 110 + t * 246;
                const b = 145 + t * 303;
                addCurve(veilWaves, `M1434 ${a}Q1520 ${(a + b) / 2 - 5} 1600 ${b}`, 0.08 + t * 0.26);
            }
            // right edge, rising lines
            for (let i = 0; i < 24; i++) {
                const a = 206 + i * 3.2;
                addCurve(veilWaves, `M1434 ${a}Q1530 ${190 + i * 2.2} 1600 ${128 + i}`, 0.16);
            }
        </script>
    </body>
</html>
